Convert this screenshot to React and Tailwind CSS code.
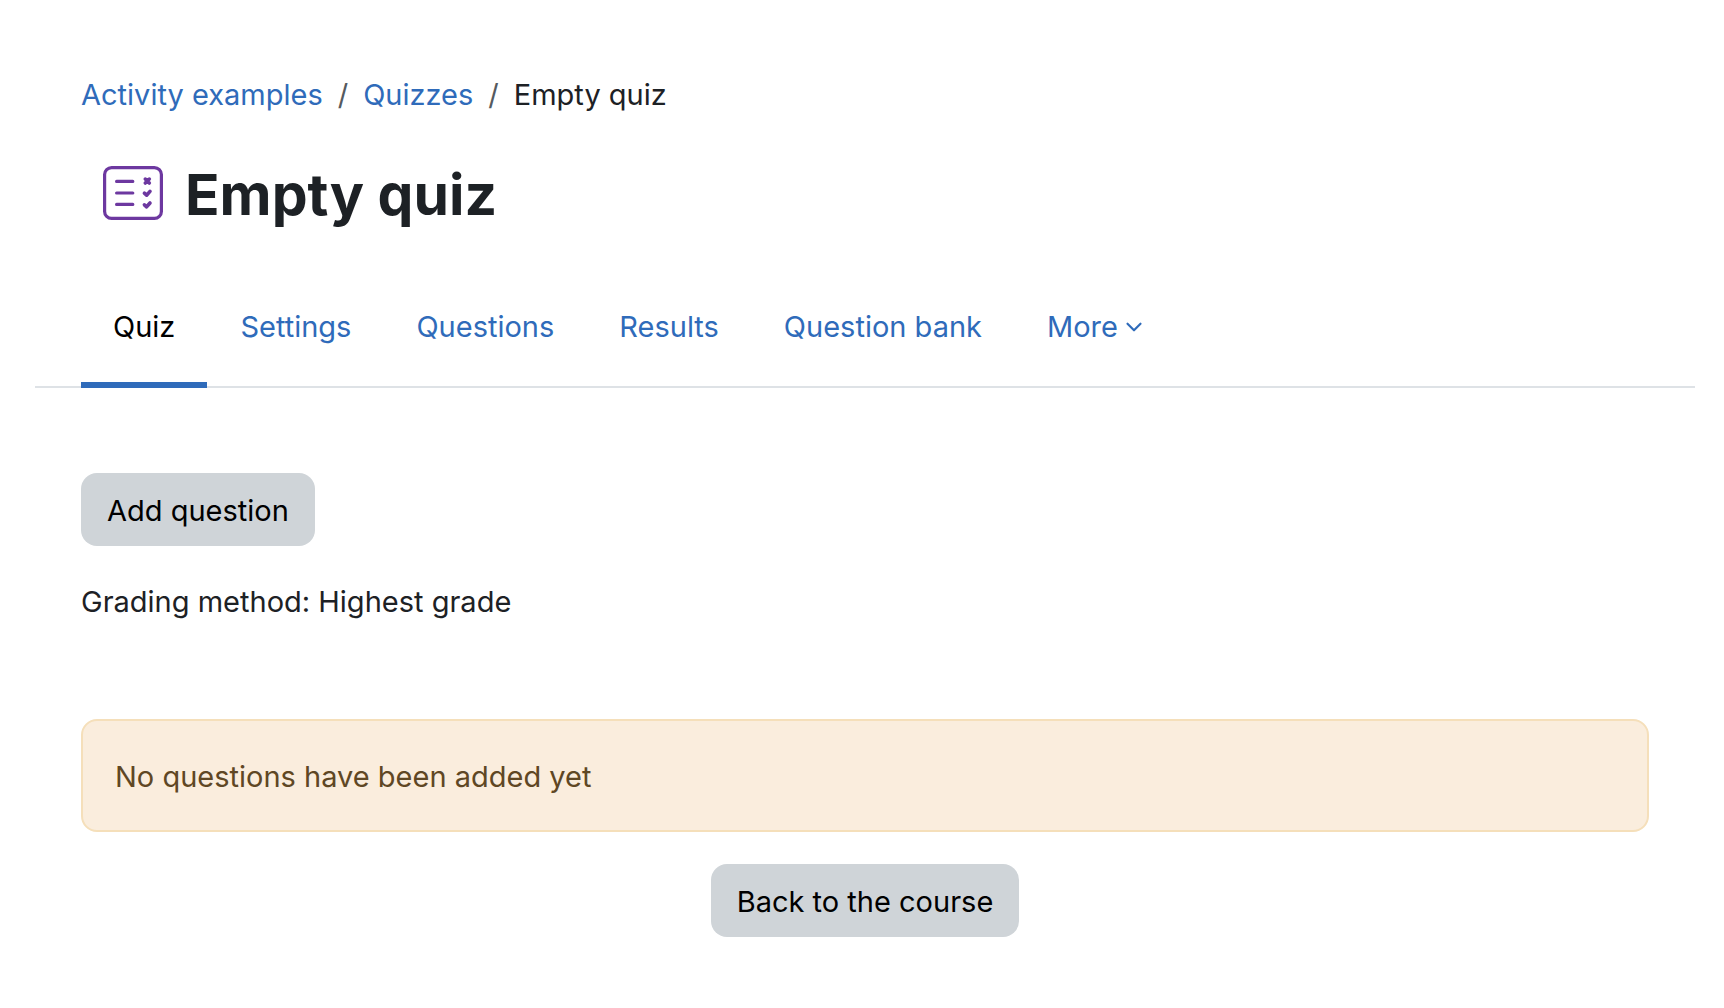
import { ChevronDown } from "lucide-react";

const crumbs = [
  { label: "Activity examples", href: "#course" },
  { label: "Quizzes", href: "#section" },
];

const tabs = ["Quiz", "Settings", "Questions", "Results", "Question bank"];

function QuizIcon() {
  return (
    <svg
      viewBox="0 0 60 54"
      fill="none"
      stroke="currentColor"
      strokeWidth="3.2"
      strokeLinecap="round"
      className="h-[54px] w-[60px] shrink-0 text-[#6d38a0]"
      aria-hidden="true"
    >
      <rect x="1.6" y="1.6" width="56.8" height="50.8" rx="7" />
      <path d="M13.6 15.4h16.2M13.6 27h16.2M13.6 38.4h16.2" />
      <path d="M42.3 13.1l4 4M46.3 13.1l-4 4" strokeWidth="3.6" />
      <path
        d="M41.4 27.2l2.2 2 3.4-3.8M41.4 38.8l2.2 2 3.4-3.8"
        strokeWidth="3.6"
        strokeLinejoin="round"
      />
    </svg>
  );
}

function Button({ children }) {
  return (
    <button
      type="button"
      className="rounded-2xl bg-[#cfd4d8] px-[26px] pt-[15px] pb-[13px] text-black"
    >
      {children}
    </button>
  );
}

export default function App() {
  return (
    <div className="min-h-screen bg-white pt-[72px] pr-[29px] pl-[35px] font-['Inter',sans-serif] text-[29px] leading-[45px] text-[#1d2125]">
      <header className="px-[46px]">
        <nav aria-label="Breadcrumb">
          <ol className="flex flex-wrap">
            {crumbs.map((crumb) => (
              <li key={crumb.label} className="flex">
                <a href={crumb.href} className="text-[#2f6bba]">
                  {crumb.label}
                </a>
                <span className="px-[15px] text-[#555a60]">/</span>
              </li>
            ))}
            <li aria-current="page">Empty quiz</li>
          </ol>
        </nav>
        <div className="mt-[39px] flex items-center gap-[22px] pl-[22px]">
          <QuizIcon />
          <h1 className="pt-1 text-[57px] leading-[70px] font-bold">
            Empty quiz
          </h1>
        </div>
      </header>

      <nav
        aria-label="Quiz"
        className="mt-[39px] flex items-start gap-px border-b-2 border-[#dee2e6] px-[46px]"
      >
        {tabs.map((tab, i) => (
          <a
            key={tab}
            href="#tab"
            aria-current={i === 0 ? "page" : undefined}
            className={
              i === 0
                ? "-mb-[2px] border-b-6 border-[#2f6bba] px-8 pt-[35px] pb-[33px] text-black"
                : "px-8 pt-[35px] pb-[33px] text-[#2f6bba]"
            }
          >
            {tab}
          </a>
        ))}
        <button
          type="button"
          className="flex items-center gap-[3px] px-8 pt-[35px] pb-[33px] text-[#2f6bba]"
        >
          More
          <ChevronDown size={26} strokeWidth={2} />
        </button>
      </nav>

      <main className="px-[46px] pt-[85px]">
        <Button>Add question</Button>
        <p className="mt-[33px]">Grading method: Highest grade</p>
        <div
          role="status"
          className="mt-[95px] rounded-2xl border-2 border-[#f5dfba] bg-[#faeddd] px-8 pt-[33px] pb-[31px] text-[#5f4724]"
        >
          No questions have been added yet
        </div>
        <div className="mt-8 flex justify-center">
          <Button>Back to the course</Button>
        </div>
      </main>
    </div>
  );
}
